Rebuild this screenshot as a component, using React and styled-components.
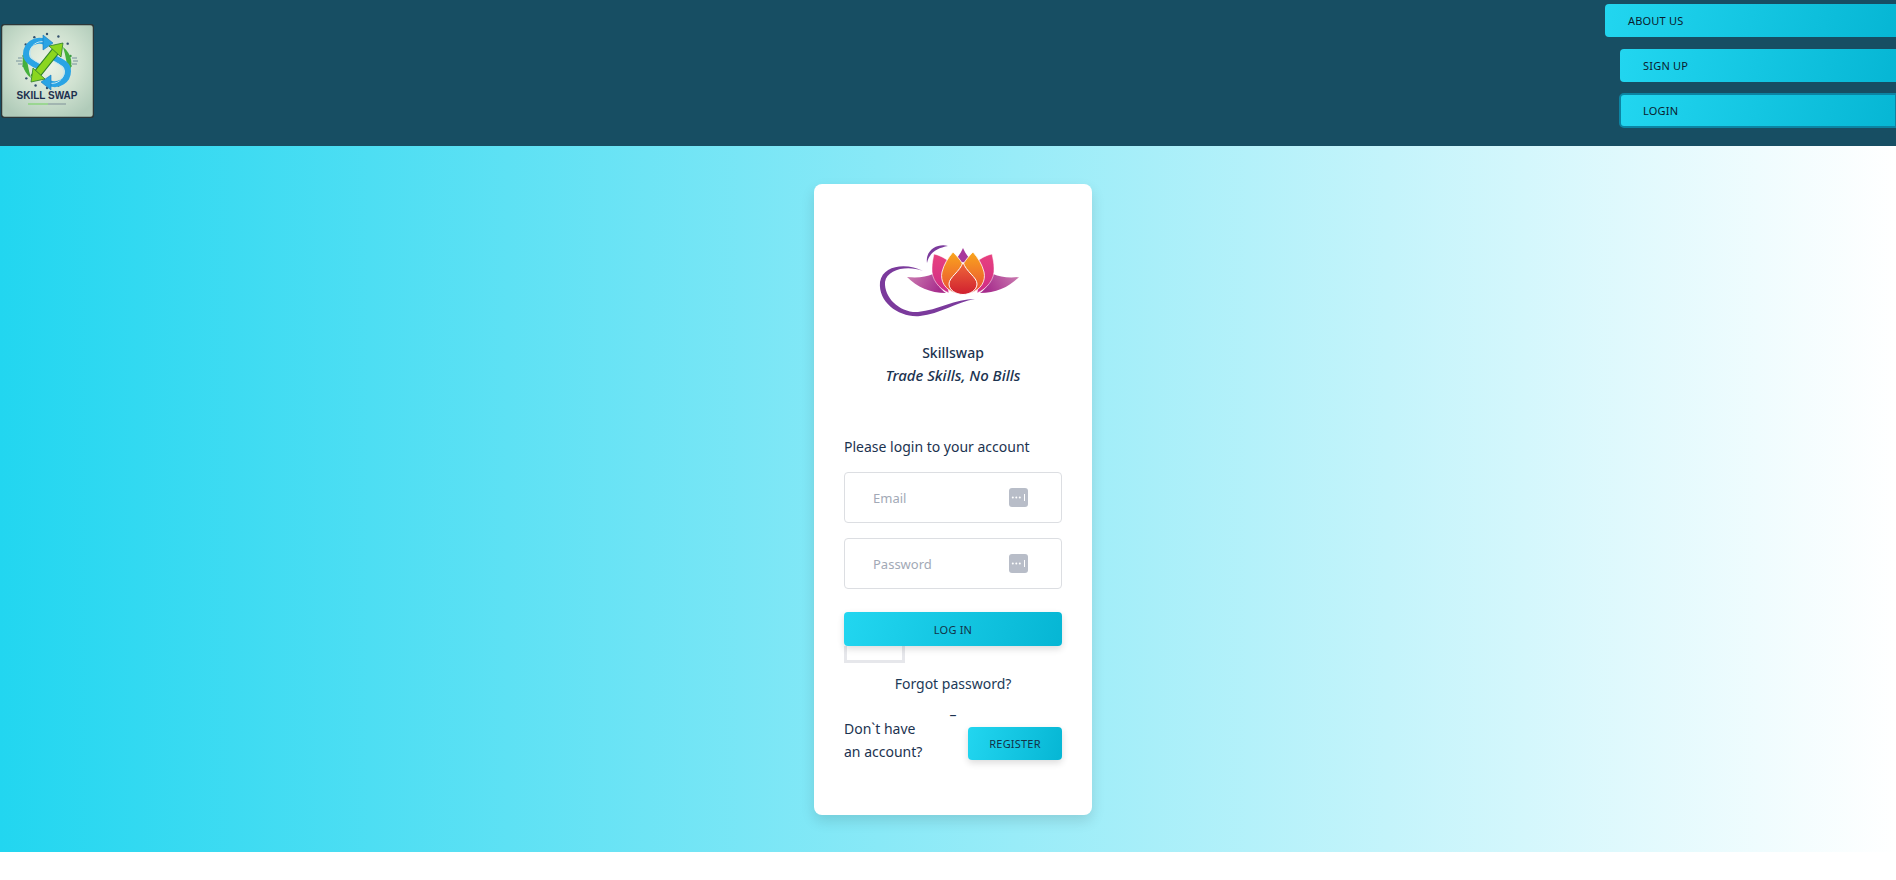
import React from 'react';
import styled, { createGlobalStyle } from 'styled-components';

const GlobalStyle = createGlobalStyle`
  html, body {
    margin: 0;
    padding: 0;
    background: #fff;
    overflow: hidden;
  }
  * {
    box-sizing: border-box;
  }
  body {
    font-family: "Noto Sans", "Open Sans", sans-serif;
    color: #1c3350;
  }
`;

const Page = styled.div`
  width: 100%;
  height: 880px;
  overflow: hidden;
`;

const Header = styled.header`
  height: 146px;
  background-color: #174e63;
  display: flex;
  justify-content: space-between;
  overflow: hidden;
`;

const Brand = styled.div`
  padding: 24px 0 0 1px;
`;

const BrandMark = styled.svg`
  display: block;
  width: 93px;
  height: 94px;
`;

const Nav = styled.nav`
  width: 291px;
  padding-top: 4px;
  display: flex;
  flex-direction: column;
  gap: 12px;
`;

const gradient = 'linear-gradient(105deg, #22d6f0 0%, #06b6d4 100%)';

const NavButton = styled.button`
  height: 33px;
  margin-left: ${(p) => p.$indent || 0}px;
  padding: 0 0 0 23px;
  border: 0;
  border-radius: 4px 0 0 4px;
  background: ${gradient};
  color: #0a1c2e;
  font-family: inherit;
  font-size: 11px;
  letter-spacing: 0.2px;
  text-align: left;
  text-transform: uppercase;
  outline: ${(p) => (p.$active ? '2px solid #0b84a3' : 'none')};
  outline-offset: -1px;
`;

const Hero = styled.main`
  height: 706px;
  padding: 38px 0 0 10px;
  background: linear-gradient(to right, #22d6f0 0%, #ffffff 100%);
  display: flex;
  justify-content: center;
`;

const Card = styled.section`
  width: 278px;
  height: 631px;
  padding: 0 30px;
  background: #fff;
  border-radius: 8px;
  box-shadow: 0 6px 14px rgba(0, 0, 0, 0.12);
`;

const LogoBlock = styled.div`
  padding-top: 61px;
  display: flex;
  flex-direction: column;
  align-items: center;
  text-align: center;
`;

const LotusMark = styled.svg`
  display: block;
  flex-shrink: 0;
  width: 160px;
  height: 90px;
  margin: -10px 0 -7px -6px;
`;

const Title = styled.div`
  margin-top: 23px;
  font-size: 14px;
  font-weight: 500;
  line-height: 23px;
`;

const Tagline = styled.div`
  margin-top: -1px;
  font-size: 15px;
  font-style: italic;
  font-weight: 500;
  line-height: 24px;
`;

const Prompt = styled.p`
  margin: 48px 0 13px;
  font-size: 14px;
  line-height: 24px;
`;

const Field = styled.div`
  position: relative;
  height: 51px;
  margin-bottom: 15px;
`;

const Input = styled.input`
  width: 100%;
  height: 100%;
  padding: 0 48px 0 28px;
  border: 1px solid #dcdee2;
  border-radius: 4px;
  background: #fff;
  font-family: inherit;
  font-size: 13px;
  color: #1c3350;

  &::placeholder {
    color: #a2a9b6;
    opacity: 1;
  }
`;

const KeyBadge = styled.svg`
  position: absolute;
  top: 16px;
  right: 34px;
  width: 19px;
  height: 19px;
`;

const PrimaryButton = styled.button`
  position: relative;
  display: block;
  width: ${(p) => p.$width || '100%'};
  height: ${(p) => p.$height || 34}px;
  margin-top: ${(p) => p.$top || 0}px;
  flex-shrink: 0;
  border: 0;
  border-radius: 4px;
  background: ${gradient};
  color: #123247;
  font-family: inherit;
  font-size: 11px;
  letter-spacing: 0.2px;
  text-transform: uppercase;
  box-shadow: 0 3px 7px rgba(0, 0, 0, 0.14);
`;

const EmptyBox = styled.div`
  width: 61px;
  height: 17px;
  border: 3px solid #e6e7eb;
  border-top: 0;
`;

const ForgotLink = styled.a`
  display: block;
  margin-top: 9px;
  font-size: 14px;
  line-height: 24px;
  text-align: center;
  color: #1c3a58;
`;

const Dash = styled.div`
  height: 14px;
  margin-top: 12px;
  font-size: 14px;
  line-height: 14px;
  text-align: center;
`;

const RegisterRow = styled.div`
  display: flex;
  justify-content: space-between;
  align-items: flex-start;
  margin-top: -5px;
`;

const RegisterText = styled.p`
  width: 90px;
  margin: 0;
  font-size: 14px;
  line-height: 23px;
`;

const ringDots = [-90, -65, -40, -118, -142, 40, 65, 90, 115, 140];
const greenDots = [-12, 12, 168, 192];

function SkillSwapLogo() {
  const half = (
    <>
      <path d="M25 27 C19 36 21 47 30 54 C27 45 26 36 25 27Z" fill="#45b03c" />
      <path d="M44 18 C34 14 25 21 25 30 C25 38 34 40 42 45" fill="none" stroke="#2aa4e4" strokeWidth="6" />
      <path d="M44 18 C36 16 29 22 29 29 C29 35 35 37 41 41" fill="none" stroke="#bfe6f4" strokeWidth="1" />
      <path d="M42 11 L52 19 L42 26 Z" fill="#2aa4e4" stroke="#1577bd" strokeWidth="0.6" />
    </>
  );
  const arrowHead = <path d="M62 19 L48 22 L60 33 Z" fill="#8bd61f" stroke="#2d7f2b" strokeWidth="0.8" />;
  return (
    <BrandMark viewBox="0 0 93 94">
      <defs>
        <radialGradient id="ssBg" cx="50%" cy="42%" r="65%">
          <stop offset="0%" stopColor="#eef4e8" />
          <stop offset="55%" stopColor="#cfe1d0" />
          <stop offset="100%" stopColor="#b0cbb9" />
        </radialGradient>
      </defs>
      <rect x="0.5" y="0.5" width="92" height="93" rx="3" fill="url(#ssBg)" stroke="#2c3738" strokeWidth="1.5" />
      {ringDots.map((a) => (
        <circle key={a} cx={46 + 27 * Math.cos((a * Math.PI) / 180)} cy={37 + 27 * Math.sin((a * Math.PI) / 180)} r="1.2" fill="#33506d" />
      ))}
      {greenDots.map((a) => (
        <circle key={a} cx={46 + 24 * Math.cos((a * Math.PI) / 180)} cy={37 + 24 * Math.sin((a * Math.PI) / 180)} r="1.2" fill="#3c9b46" />
      ))}
      <path d="M15 37 H21 M17 34 H22 M17 40 H22 M72 37 H77 M71 34 H76 M71 40 H76" stroke="#6e8a96" strokeWidth="0.9" />
      {half}
      <g transform="rotate(180 46 38.5)">{half}</g>
      <path d="M33 54 L57 24" stroke="#2d7f2b" strokeWidth="8.5" />
      <path d="M33 54 L57 24" stroke="#8bd61f" strokeWidth="6.5" />
      {arrowHead}
      <g transform="rotate(180 46 38.5)">{arrowHead}</g>
      <text x="46" y="75" textAnchor="middle" fontFamily="Liberation Sans, sans-serif" fontSize="10" fontWeight="700" fill="#1d2f4e">SKILL SWAP</text>
      <path d="M27 80 H47" stroke="#7ed36e" strokeWidth="1.2" />
      <path d="M47 80 H65" stroke="#8a9ca0" strokeWidth="1.2" />
    </BrandMark>
  );
}

function LotusLogo() {
  const petals = (
    <>
      <path d="M37 42 C48 43 56 42 63 39 C66 48 70 54 76 58 C60 58 47 52 37 42Z" fill="url(#lotusPurple)" />
      <path d="M64 19 C72 21 79 25 84 32 C78 42 77 50 79 58 C69 54 61 44 62 33 C62 28 63 24 64 19Z" fill="url(#lotusPink)" stroke="#fff" strokeWidth="0.5" />
      <path d="M83 17 C88 22 93 28 95 34 C85 39 80 48 86 58 C75 55 70 46 72 37 C74 29 78 23 83 17Z" fill="url(#lotusOrange)" stroke="#fff" strokeWidth="0.8" />
    </>
  );
  return (
    <LotusMark viewBox="0 0 160 90">
      <defs>
        <linearGradient id="lotusPurple" x1="0" y1="0" x2="1" y2="0.3">
          <stop offset="0%" stopColor="#cc7fb2" />
          <stop offset="100%" stopColor="#a62c8c" />
        </linearGradient>
        <linearGradient id="lotusPink" x1="0" y1="0" x2="0" y2="1">
          <stop offset="0%" stopColor="#e8417f" />
          <stop offset="100%" stopColor="#cf2c86" />
        </linearGradient>
        <linearGradient id="lotusOrange" x1="0" y1="0" x2="0" y2="1">
          <stop offset="0%" stopColor="#f9a61c" />
          <stop offset="100%" stopColor="#ea4f35" />
        </linearGradient>
        <linearGradient id="lotusRed" x1="0" y1="0" x2="0" y2="1">
          <stop offset="0%" stopColor="#ef6a3a" />
          <stop offset="100%" stopColor="#d01f2f" />
        </linearGradient>
      </defs>
      <path d="M53 36 C38 28 13 29 10 47 C8 68 30 83 50 81 C70 79 86 67 105 64 C85 64 68 75 48 77 C30 78 14 63 15 47 C17 34 38 30 53 36Z" fill="#7b3a9c" />
      <path d="M78 11 C68 8 55 15 57 28 C59 18 67 13 78 11Z" fill="#7b3a9c" />
      <path d="M93 13 C96 20 100 24 103 27 C99 30 96 32 93 36 C90 32 87 30 83 27 C86 24 90 20 93 13Z" fill="#a8389b" />
      {petals}
      <g transform="translate(186 0) scale(-1 1)">{petals}</g>
      <path d="M93 27 C96 37 107 42 107 49 C107 55 100 59.5 93 59.5 C86 59.5 79 55 79 49 C79 42 90 37 93 27Z" fill="url(#lotusRed)" stroke="#fff" strokeWidth="1" />
    </LotusMark>
  );
}

function PasswordField({ placeholder, type }) {
  return (
    <Field>
      <Input type={type} placeholder={placeholder} />
      <KeyBadge viewBox="0 0 19 19">
        <rect width="19" height="19" rx="3" fill="#b8bdc8" />
        <circle cx="3.8" cy="9.5" r="1" fill="#fff" />
        <circle cx="7.3" cy="9.5" r="1" fill="#fff" />
        <circle cx="10.8" cy="9.5" r="1" fill="#fff" />
        <rect x="15" y="6" width="1" height="7" fill="#fff" />
      </KeyBadge>
    </Field>
  );
}

export default function App() {
  return (
    <Page>
      <GlobalStyle />
      <Header>
        <Brand>
          <SkillSwapLogo />
        </Brand>
        <Nav>
          <NavButton>About us</NavButton>
          <NavButton $indent={15}>Sign up</NavButton>
          <NavButton $indent={15} $active>Login</NavButton>
        </Nav>
      </Header>
      <Hero>
        <Card>
          <LogoBlock>
            <LotusLogo />
            <Title>Skillswap</Title>
            <Tagline>Trade Skills, No Bills</Tagline>
          </LogoBlock>
          <Prompt>Please login to your account</Prompt>
          <PasswordField type="text" placeholder="Email" />
          <PasswordField type="password" placeholder="Password" />
          <PrimaryButton $top={23}>Log in</PrimaryButton>
          <EmptyBox />
          <ForgotLink>Forgot password?</ForgotLink>
          <Dash>–</Dash>
          <RegisterRow>
            <RegisterText>Don`t have an account?</RegisterText>
            <PrimaryButton $width="94px" $height={33} $top={10}>Register</PrimaryButton>
          </RegisterRow>
        </Card>
      </Hero>
    </Page>
  );
}
